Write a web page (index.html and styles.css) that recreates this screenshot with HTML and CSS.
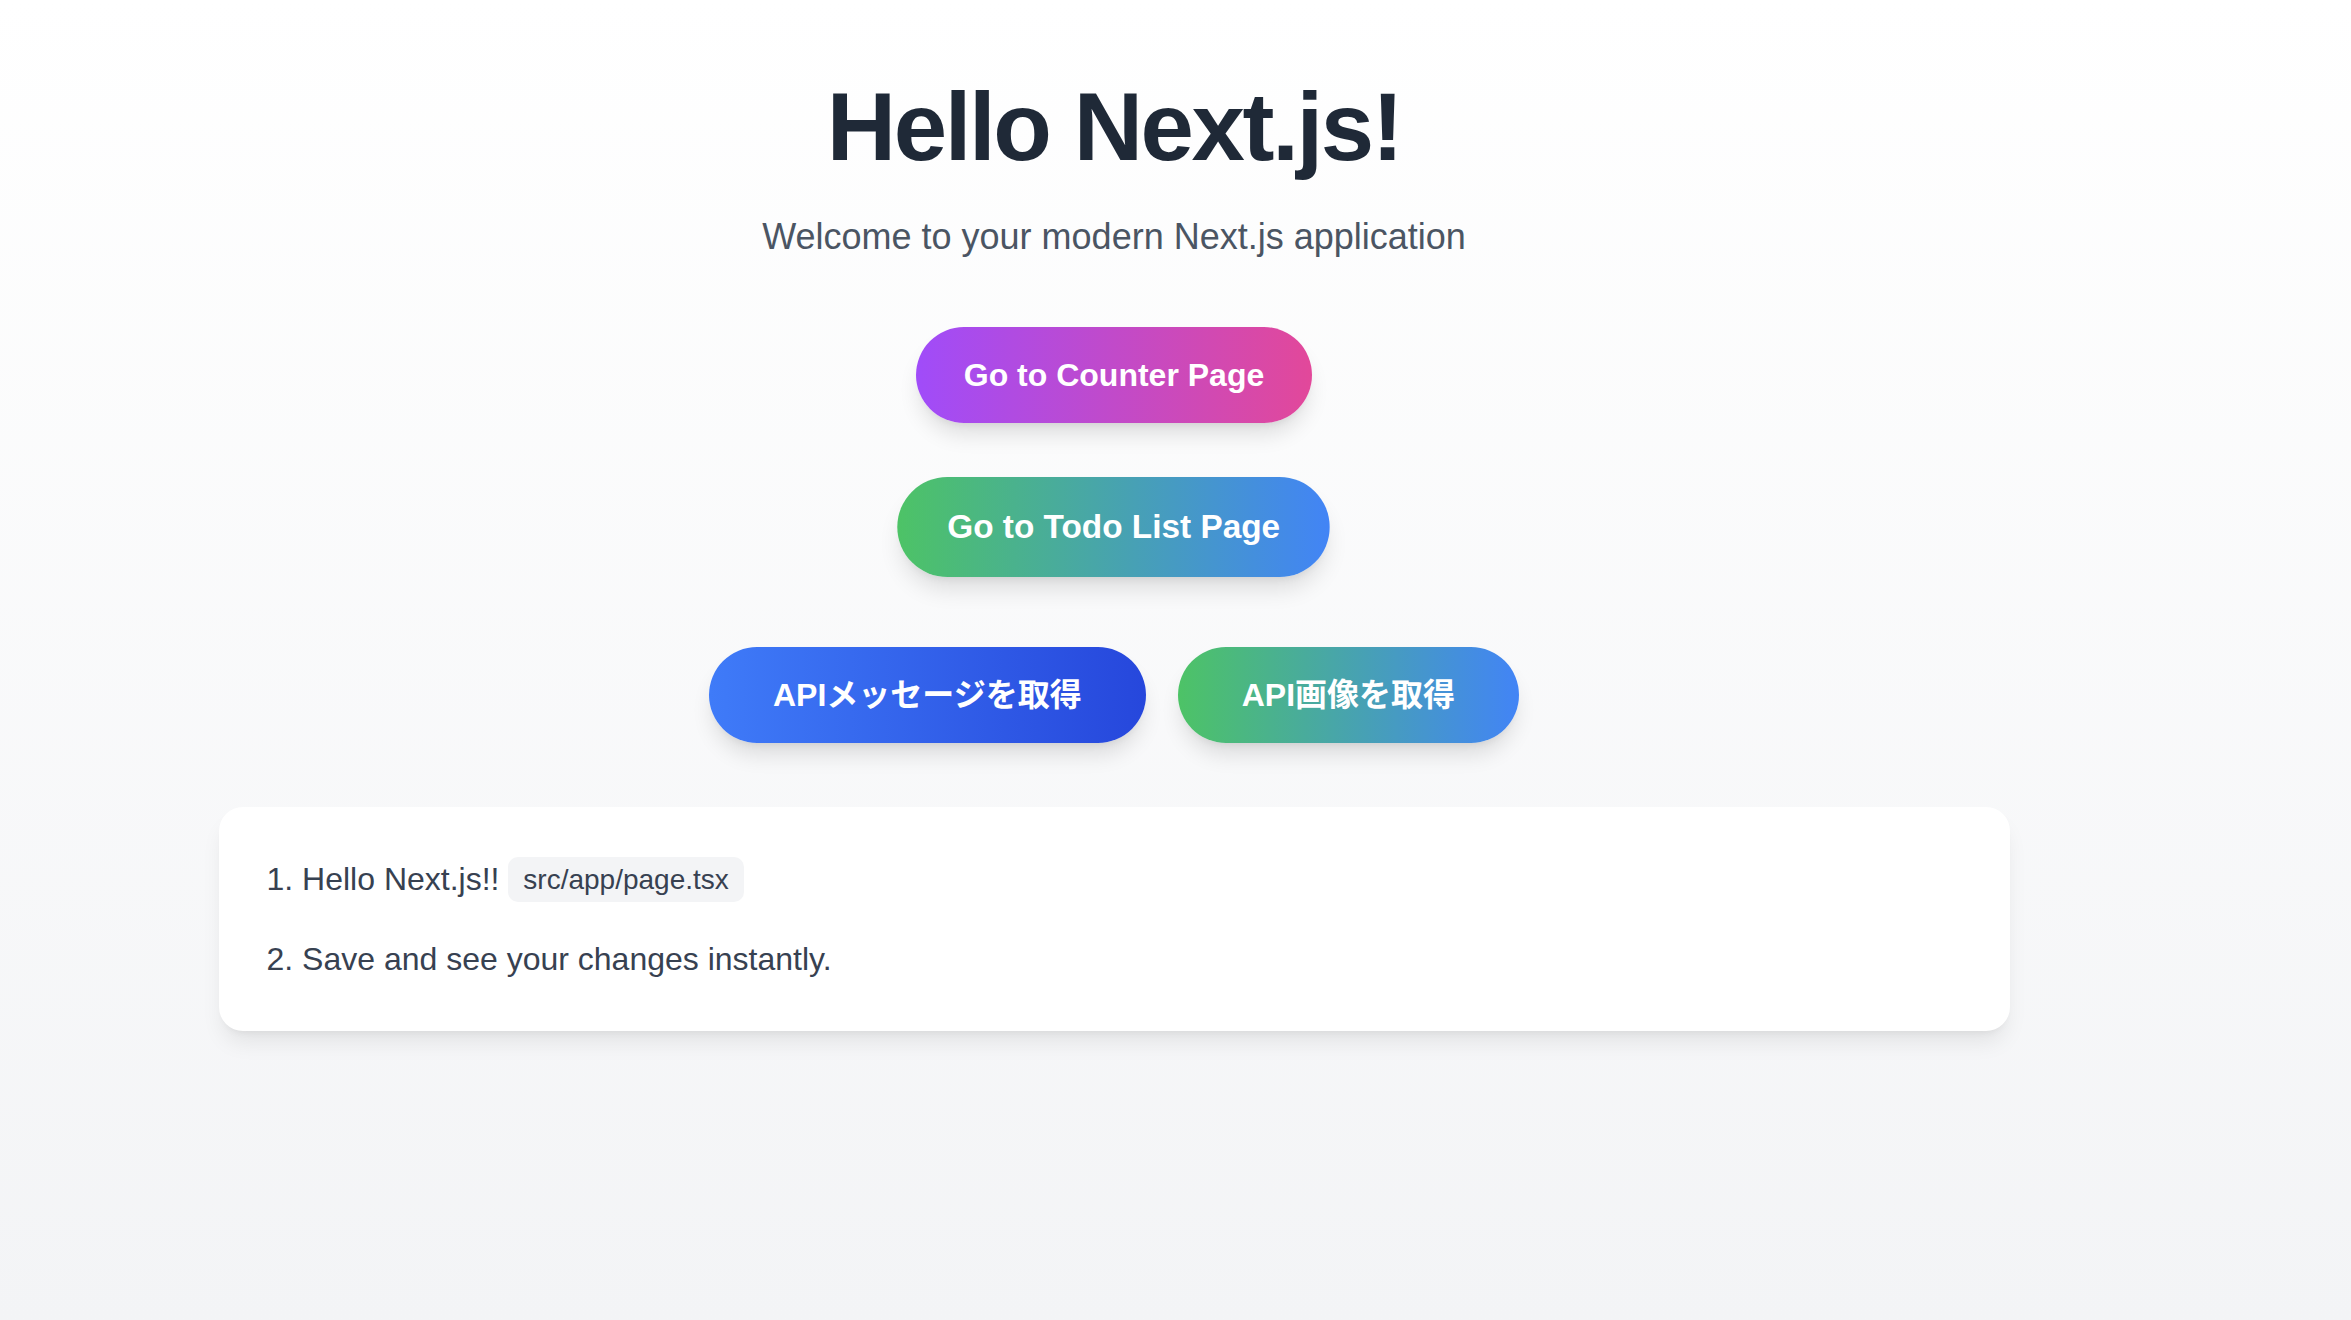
FILE: index.html
```html
<!DOCTYPE html>
<html lang="ja">
<head>
<meta charset="utf-8">
<title>Hello Next.js!</title>
<link rel="stylesheet" href="styles.css">
</head>
<body>
<main class="page">
  <h1 class="title">Hello Next.js!</h1>
  <p class="subtitle">Welcome to your modern Next.js application</p>
  <a class="btn btn-counter" href="#">Go to Counter Page</a>
  <a class="btn btn-todo" href="#">Go to Todo List Page</a>
  <div class="api-row">
    <button class="btn btn-wide btn-blue" type="button">APIメッセージを取得</button>
    <button class="btn btn-wide btn-green" type="button">API画像を取得</button>
  </div>
  <section class="card">
    <ol class="steps">
      <li>Hello Next.js!! <code class="code">src/app/page.tsx</code></li>
      <li>Save and see your changes instantly.</li>
    </ol>
  </section>
</main>
</body>
</html>
```
FILE: styles.css
```css
html, body {
  margin: 0;
  padding: 0;
}

body {
  min-height: 1320px;
  background: linear-gradient(to bottom, #ffffff 0%, #f3f4f6 100%);
  font-family: "Liberation Sans", "Noto Sans CJK JP", Arial, sans-serif;
  color: #1f2937;
}

.page {
  display: flex;
  flex-direction: column;
  align-items: center;
  padding: 79px 123px 0 0;
}

.title {
  margin: 0 0 38px;
  font-size: 96px;
  line-height: 96px;
  font-weight: 700;
  letter-spacing: -2.4px;
  color: #1f2937;
}

.subtitle {
  margin: 0 0 66px;
  font-size: 36px;
  line-height: 48px;
  color: #4b5563;
}

.btn {
  display: inline-block;
  box-sizing: border-box;
  height: 96px;
  padding: 30px 48px;
  border: 0;
  border-radius: 9999px;
  font-family: "Liberation Sans", "Noto Sans CJK JP", Arial, sans-serif;
  font-size: 32px;
  line-height: 36px;
  font-weight: 700;
  color: #ffffff;
  text-decoration: none;
  white-space: nowrap;
  cursor: pointer;
  box-shadow: 0 15px 22px -4px rgba(0, 0, 0, 0.12), 0 6px 9px -6px rgba(0, 0, 0, 0.1);
}

.btn-counter {
  margin-bottom: 56px;
  background: linear-gradient(to right, #a04cf9, #e2489a);
}

.btn-todo {
  margin-bottom: 72px;
  background: linear-gradient(to right, #4dc366, #4284f6);
  transform: scale(1.042);
}

.api-row {
  display: flex;
  gap: 32px;
  margin-bottom: 64px;
}

.btn-wide {
  padding-left: 64px;
  padding-right: 64px;
}

.btn-blue {
  background: linear-gradient(to right, #3f7bf8, #2647dc);
}

.btn-green {
  background: linear-gradient(to right, #4dc366, #4284f6);
}

.card {
  box-sizing: border-box;
  width: 1791px;
  padding: 48px;
  background: #ffffff;
  border-radius: 24px;
  box-shadow: 0 15px 22px -4px rgba(0, 0, 0, 0.08), 0 6px 9px -6px rgba(0, 0, 0, 0.08);
}

.steps {
  margin: 0;
  padding: 0;
  list-style: decimal inside;
  font-size: 32px;
  line-height: 48px;
  color: #374151;
}

.steps li + li {
  margin-top: 31px;
}

.code {
  display: inline-block;
  vertical-align: middle;
  height: 45px;
  padding: 0 15px;
  border-radius: 10px;
  background: #f3f4f6;
  font-family: "Liberation Sans", Arial, sans-serif;
  font-size: 28px;
  line-height: 45px;
  color: #374151;
  position: relative;
  top: -2px;
}
```
